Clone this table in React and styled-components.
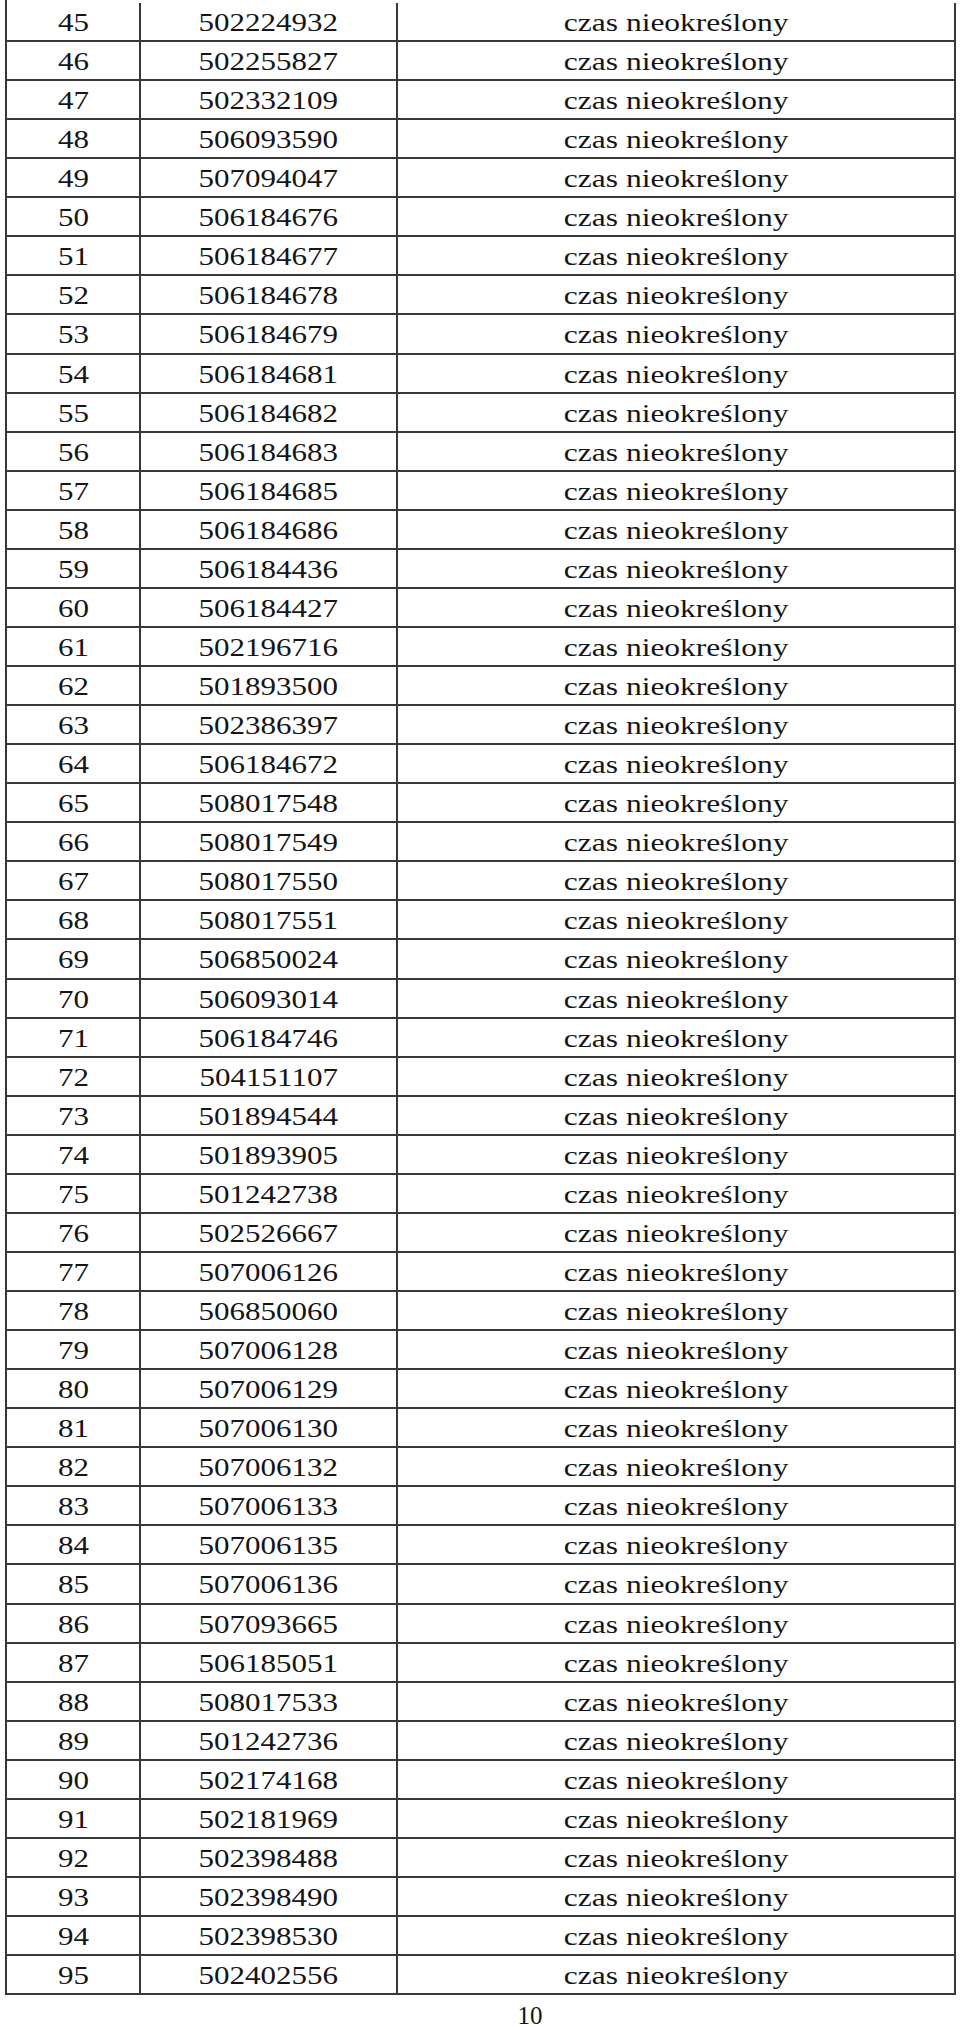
import styled, { createGlobalStyle } from "styled-components";

const ROWS = [
  [45, "502224932"], [46, "502255827"], [47, "502332109"], [48, "506093590"],
  [49, "507094047"], [50, "506184676"], [51, "506184677"], [52, "506184678"],
  [53, "506184679"], [54, "506184681"], [55, "506184682"], [56, "506184683"],
  [57, "506184685"], [58, "506184686"], [59, "506184436"], [60, "506184427"],
  [61, "502196716"], [62, "501893500"], [63, "502386397"], [64, "506184672"],
  [65, "508017548"], [66, "508017549"], [67, "508017550"], [68, "508017551"],
  [69, "506850024"], [70, "506093014"], [71, "506184746"], [72, "504151107"],
  [73, "501894544"], [74, "501893905"], [75, "501242738"], [76, "502526667"],
  [77, "507006126"], [78, "506850060"], [79, "507006128"], [80, "507006129"],
  [81, "507006130"], [82, "507006132"], [83, "507006133"], [84, "507006135"],
  [85, "507006136"], [86, "507093665"], [87, "506185051"], [88, "508017533"],
  [89, "501242736"], [90, "502174168"], [91, "502181969"], [92, "502398488"],
  [93, "502398490"], [94, "502398530"], [95, "502402556"],
];

const GlobalStyle = createGlobalStyle`
  html, body {
    margin: 0;
    padding: 0;
    background: #fff;
  }
  body {
    font-family: "Liberation Serif", "Times New Roman", serif;
    color: #151515;
  }
`;

const Page = styled.div`
  width: 960px;
  height: 2027px;
  overflow: hidden;
`;

const Table = styled.div`
  margin-left: 5px;
  width: 951px;
  border-left: 2px solid #383838;
  box-sizing: border-box;
`;

const Row = styled.div`
  display: grid;
  grid-template-columns: 134px 257px 558px;
  height: 39.07px;
  box-sizing: border-box;
  border-bottom: 2px solid #383838;

  &:first-child {
    height: 42px;
    padding-top: 2.93px;
  }
`;

const Cell = styled.div`
  border-right: 2px solid #383838;
  box-sizing: border-box;
  text-align: center;
  font-size: 25px;
  line-height: 35px;
  padding-top: 2px;
  white-space: nowrap;
`;

const Stretch = styled.span`
  display: inline-block;
  transform: scaleX(${(p) => p.$scale || 1.24});
`;

const Footer = styled.div`
  padding-left: 100px;
  margin-top: 11px;
  text-align: center;
  font-size: 25px;
  line-height: 20px;
`;

export default function App() {
  return (
    <Page>
      <GlobalStyle />
      <Table>
        {ROWS.map(([no, id]) => (
          <Row key={no}>
            <Cell>
              <Stretch>{no}</Stretch>
            </Cell>
            <Cell>
              <Stretch>{id}</Stretch>
            </Cell>
            <Cell>
              <Stretch $scale={1.26}>czas nieokreślony</Stretch>
            </Cell>
          </Row>
        ))}
      </Table>
      <Footer>10</Footer>
    </Page>
  );
}
